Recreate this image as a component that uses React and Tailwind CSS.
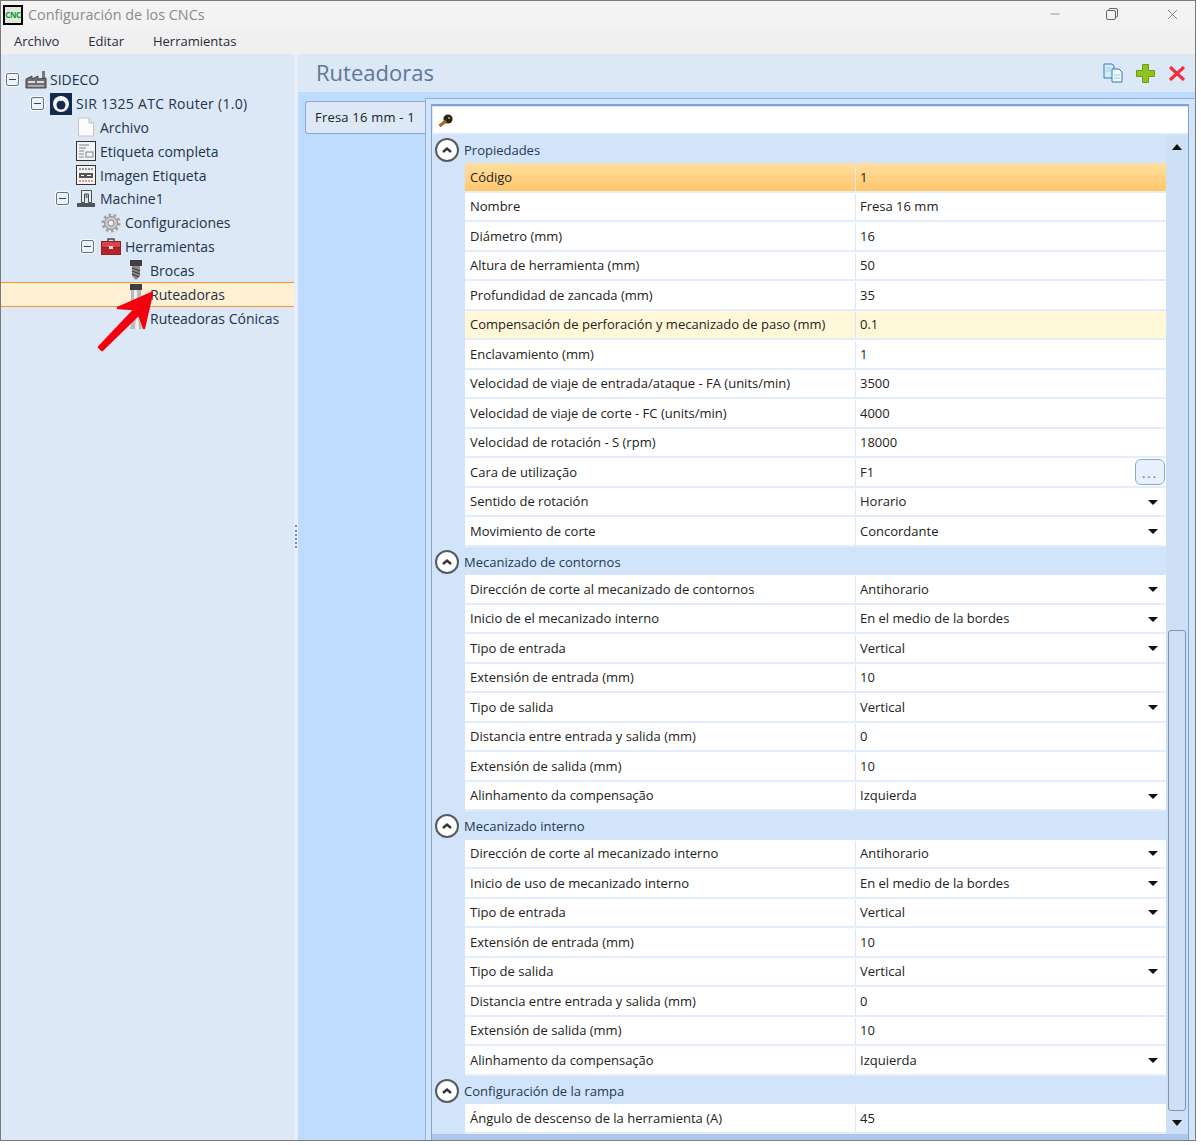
import { Minus, X } from 'lucide-react';

const FONT = "font-['Open_Sans','Noto_Sans',sans-serif]";

const Expander = () => (
  <span className="flex h-[13px] w-[13px] items-center justify-center rounded-[2px] border border-[#5f7488] bg-[#eef3fa] shadow-[0_0_0_1px_#f7faff]">
    <span className="h-px w-[7px] bg-[#33475c]" />
  </span>
);

const AppIcon = () => (
  <div className="flex h-[20px] w-[20px] items-center justify-center border-2 border-black bg-[#dfe8df] text-[8px] font-bold leading-none tracking-[-0.4px] text-[#0d9a2e]">
    CNC
  </div>
);

const Factory = () => (
  <svg width="22" height="20" viewBox="0 0 22 20">
    <rect x="17" y="1" width="3" height="8" fill="#777" />
    <path d="M1 9 L7 6 V9 L13 6 V9 L21 8 V18 H1 Z" fill="#6f6f6f" stroke="#4a4a4a" />
    <rect x="3" y="11" width="7" height="2" fill="#ddd" />
    <rect x="12" y="11" width="7" height="2" fill="#ddd" />
    <rect x="3" y="15" width="16" height="2" fill="#aaa" />
  </svg>
);

const SirLogo = () => (
  <svg width="22" height="22" viewBox="0 0 22 22">
    <rect width="22" height="22" fill="#132a50" />
    <circle cx="11" cy="11" r="8" fill="#f4f6f9" />
    <circle cx="11" cy="12" r="4.5" fill="#132a50" />
    <rect x="10" y="3" width="2" height="5" fill="#f4f6f9" />
  </svg>
);

const DocIcon = () => (
  <svg width="18" height="20" viewBox="0 0 18 20">
    <path d="M1.5 1 H12 L16.5 6 V19 H1.5 Z" fill="#fbfbfb" stroke="#c4c4c4" />
    <path d="M12 1 V6 H16.5" fill="#e6e6e6" stroke="#c4c4c4" />
  </svg>
);

const LabelIcon = () => (
  <svg width="20" height="20" viewBox="0 0 20 20">
    <rect x="0.5" y="0.5" width="19" height="19" fill="#f1f3f5" stroke="#333" />
    <path d="M3 4 H13 M3 7 H10 M3 10 H8 M3 13 H8 M3 16 H8" stroke="#7b8791" />
    <rect x="10" y="11" width="7" height="5" fill="none" stroke="#7b8791" />
  </svg>
);

const ImageLabelIcon = () => (
  <svg width="20" height="20" viewBox="0 0 20 20">
    <rect x="0.5" y="0.5" width="19" height="19" fill="#f4f4f4" stroke="#333" />
    <path d="M3 4 H17" stroke="#333" strokeDasharray="2 1" />
    <rect x="3" y="8" width="14" height="5" fill="#555" />
    <path d="M5 10.5 H8 M11 10.5 H15" stroke="#fff" />
    <path d="M3 16 H17" stroke="#d33" strokeDasharray="2 1" />
  </svg>
);

const MachineIcon = () => (
  <svg width="20" height="20" viewBox="0 0 20 20">
    <path d="M5.5 1.5 H15.5 V13.5 H12.5 V5 H8.5 V13.5 H5.5 Z" fill="#eceef0" stroke="#4a5058" />
    <rect x="9.5" y="5" width="2" height="4" fill="#777" />
    <rect x="1" y="14" width="18" height="4" fill="#4f555c" />
  </svg>
);

const GearIcon = () => (
  <svg width="20" height="20" viewBox="0 0 20 20">
    <circle cx="10" cy="10" r="6.5" fill="#c9c9c9" stroke="#8a8a8a" />
    <circle cx="10" cy="10" r="8" fill="none" stroke="#a0a0a0" strokeWidth="3" strokeDasharray="2.5 2.5" />
    <circle cx="10" cy="10" r="3" fill="#f0f0f0" stroke="#8a8a8a" />
  </svg>
);

const ToolboxIcon = () => (
  <svg width="20" height="18" viewBox="0 0 20 18">
    <path d="M7 5 V2 H13 V5" fill="none" stroke="#4a4a4a" strokeWidth="1.5" />
    <rect x="0.5" y="4.5" width="19" height="6" fill="#e0424a" stroke="#8d2228" />
    <rect x="0.5" y="10.5" width="19" height="7" fill="#b5232b" stroke="#8d2228" />
    <rect x="8" y="9" width="4" height="3" fill="#f0e0e0" />
  </svg>
);

const DrillBit = () => (
  <svg width="14" height="20" viewBox="0 0 14 20">
    <rect x="1" y="0" width="12" height="6" fill="#3f3f3f" />
    <path d="M3 6 H11 V16 L7 20 L3 16 Z" fill="#8b8b8b" />
    <path d="M3 8 L11 11 M3 11 L11 14 M3 14 L10 17" stroke="#3f3f3f" strokeWidth="1.3" />
  </svg>
);

const RouterBit = () => (
  <svg width="14" height="20" viewBox="0 0 14 20">
    <rect x="1" y="0" width="12" height="6" fill="#3f3f3f" />
    <rect x="2" y="6" width="10" height="14" fill="#b9b9b9" />
    <rect x="5" y="6" width="3" height="14" fill="#efefef" />
  </svg>
);

const ConeBit = () => (
  <svg width="14" height="20" viewBox="0 0 14 20">
    <rect x="4" y="0" width="7" height="4" fill="#3f3f3f" />
    <path d="M4 4 H11 L13 20 H1 Z" fill="#b9b9b9" />
    <path d="M7 4 H9 L10 20 H6 Z" fill="#efefef" />
  </svg>
);

const tree = [
  { label: 'SIDECO', indent: 'pl-0', icon: <Factory />, open: true },
  { label: 'SIR 1325 ATC Router (1.0)', indent: 'pl-[25px]', icon: <SirLogo />, open: true, text: 'ml-px tracking-[0.28px]' },
  { label: 'Archivo', indent: 'pl-[50px]', icon: <DocIcon /> },
  { label: 'Etiqueta completa', indent: 'pl-[50px]', icon: <LabelIcon /> },
  { label: 'Imagen Etiqueta', indent: 'pl-[50px]', icon: <ImageLabelIcon /> },
  { label: 'Machine1', indent: 'pl-[50px]', icon: <MachineIcon />, open: true },
  { label: 'Configuraciones', indent: 'pl-[75px]', icon: <GearIcon /> },
  { label: 'Herramientas', indent: 'pl-[75px]', icon: <ToolboxIcon />, open: true },
  { label: 'Brocas', indent: 'pl-[100px]', icon: <DrillBit /> },
  { label: 'Ruteadoras', indent: 'pl-[100px]', icon: <RouterBit />, selected: true },
  { label: 'Ruteadoras Cónicas', indent: 'pl-[100px]', icon: <ConeBit /> },
];

const contourRows = (a, b, c) => [
  { label: a, value: 'Antihorario', select: true },
  { label: b, value: 'En el medio de la bordes', select: true },
  { label: 'Tipo de entrada', value: 'Vertical', select: true },
  { label: 'Extensión de entrada (mm)', value: '10' },
  { label: 'Tipo de salida', value: 'Vertical', select: true },
  { label: 'Distancia entre entrada y salida (mm)', value: '0' },
  { label: 'Extensión de salida (mm)', value: '10' },
  { label: c, value: 'Izquierda', select: true },
];

const sections = [
  {
    title: 'Propiedades',
    rows: [
      { label: 'Código', value: '1', active: true },
      { label: 'Nombre', value: 'Fresa 16 mm' },
      { label: 'Diámetro (mm)', value: '16' },
      { label: 'Altura de herramienta (mm)', value: '50' },
      { label: 'Profundidad de zancada (mm)', value: '35' },
      { label: 'Compensación de perforación y mecanizado de paso (mm)', value: '0.1', modified: true },
      { label: 'Enclavamiento (mm)', value: '1' },
      { label: 'Velocidad de viaje de entrada/ataque - FA (units/min)', value: '3500' },
      { label: 'Velocidad de viaje de corte - FC (units/min)', value: '4000' },
      { label: 'Velocidad de rotación - S (rpm)', value: '18000' },
      { label: 'Cara de utilização', value: 'F1', more: true },
      { label: 'Sentido de rotación', value: 'Horario', select: true },
      { label: 'Movimiento de corte', value: 'Concordante', select: true },
    ],
  },
  {
    title: 'Mecanizado de contornos',
    rows: contourRows(
      'Dirección de corte al mecanizado de contornos',
      'Inicio de el mecanizado interno',
      'Alinhamento da compensação',
    ),
  },
  {
    title: 'Mecanizado interno',
    rows: contourRows(
      'Dirección de corte al mecanizado interno',
      'Inicio de uso de mecanizado interno',
      'Alinhamento da compensação',
    ),
  },
  {
    title: 'Configuración de la rampa',
    rows: [{ label: 'Ángulo de descenso de la herramienta (A)', value: '45' }],
  },
];

const Triangle = () => (
  <svg width="10" height="5" viewBox="0 0 10 5" className="block">
    <path d="M0 0 H10 L5 5 Z" fill="#111" />
  </svg>
);

const TreeRow = ({ item }) => (
  <div
    className={`flex items-center ${item.indent} ${
      item.selected ? 'h-[24.5px] border-y border-[#f6932b] bg-[#fff0d3]' : 'h-[23.8px]'
    }`}
  >
    <span className="flex w-[23px] shrink-0 justify-center">{item.open && <Expander />}</span>
    <span className="flex w-[26px] shrink-0 justify-center pr-[2px]">{item.icon}</span>
    <span className={`whitespace-nowrap text-[#23344a] ${item.text || ''}`}>{item.label}</span>
  </div>
);

const PropRow = ({ row }) => {
  let tone = 'bg-white';
  if (row.active) tone = 'bg-gradient-to-b from-[#ffdf9f] to-[#ffc769]';
  if (row.modified) tone = 'bg-[#fff8d8]';
  return (
    <div className={`flex h-[29.5px] border-b-2 border-[#e4eefb] pt-[1px] ${tone}`}>
      <div className="flex w-[391px] shrink-0 items-center border-r border-[#dbe7f7] pl-[5px] whitespace-nowrap">
        {row.label}
      </div>
      <div className="relative flex flex-1 items-center pr-[8px] pl-[4px]">
        <span className="flex-1">{row.value}</span>
        {row.select && <Triangle />}
        {row.more && (
          <span className="absolute top-[0px] right-[1px] flex h-[26px] w-[30px] items-end justify-center rounded-[6px] border border-[#8ba8d4] bg-[#e7f0fd] pb-[1px] tracking-[2px] text-[#5c6d85]">
            ...
          </span>
        )}
      </div>
    </div>
  );
};

const Section = ({ section }) => (
  <div className="bg-[#d2e4fa]">
    <div className="relative flex h-[28.4px] items-center rounded-t-[3px] pt-[3px] pl-[32px] text-[#233a55]">
      <span className="absolute top-[3px] left-[3px] flex h-[24px] w-[24px] items-center justify-center rounded-full border-2 border-[#565b60] bg-white">
        <svg width="12" height="8" viewBox="0 0 12 8">
          <path d="M2 6 L6 2.5 L10 6" fill="none" stroke="#333" strokeWidth="2.4" />
        </svg>
      </span>
      {section.title}
    </div>
    <div className="pl-[33px]">
      {section.rows.map((row) => (
        <PropRow key={row.label} row={row} />
      ))}
    </div>
  </div>
);

export default function App() {
  return (
    <div className={`relative flex h-[1141px] w-[1196px] flex-col overflow-hidden border border-[#7b7b7b] bg-[#f0f0f0] text-[13px] text-[#222] ${FONT}`}>
      <div className="flex h-[28px] shrink-0 items-center bg-[#f3f3f3] pl-[2px]">
        <AppIcon />
        <span className="ml-[5px] flex-1 text-[14.4px] text-[#8b8b8b]">Configuración de los CNCs</span>
        <Minus size={14} strokeWidth={1} className="mr-[44px] mb-[2px] text-[#555]" />
        <svg width="12" height="12" viewBox="0 0 12 12" className="mr-[46px] mb-[2px]">
          <rect x="0.5" y="2.5" width="9" height="9" rx="1.5" fill="none" stroke="#666" />
          <path d="M3 2.5 V1.5 Q3 0.5 4 0.5 H10 Q11.5 0.5 11.5 2 V8 Q11.5 9 10 9" fill="none" stroke="#666" />
        </svg>
        <X size={17} strokeWidth={1} className="mr-[14px] mb-[2px] text-[#555]" />
      </div>
      <div className="flex h-[25px] shrink-0 items-center gap-[29px] pl-[13px] text-[#2b2b3a]">
        <span>Archivo</span>
        <span>Editar</span>
        <span>Herramientas</span>
      </div>

      <div className="flex min-h-0 flex-1">
        <aside className="w-[293px] shrink-0 bg-[#dce8f6] pt-[14px] text-[14px]">
          {tree.map((item) => (
            <TreeRow key={item.label} item={item} />
          ))}
        </aside>

        <div className="flex w-[4px] shrink-0 items-start justify-center bg-[#e8eff9] pt-[471px]">
          <span className="h-[23px] w-[2px] border-l-2 border-dotted border-[#5f8fd0]" />
        </div>

        <main className="flex min-w-0 flex-1 flex-col bg-[#bfdbfe]">
          <div className="flex h-[38px] shrink-0 items-center bg-[#dce8f6] pr-[9px] pl-[18px]">
            <h1 className="flex-1 pb-[2px] text-[22px] text-[#5b7896]">Ruteadoras</h1>
            <div className="flex items-center gap-[13px]">
              <svg width="20" height="20" viewBox="0 0 20 20">
                <path d="M1 1 H9 L11 3 V15 H1 Z" fill="#d6ebf6" stroke="#2f7db8" />
                <path d="M9 6 H16 L19 9 V19 H9 Z" fill="#f0f8fc" stroke="#2f7db8" />
                <path d="M3 5 H8 M3 8 H8 M11 12 H17 M11 15 H17" stroke="#9ccbe4" />
              </svg>
              <svg width="19" height="19" viewBox="0 0 19 19">
                <path d="M6.5 0.5 H12.5 V6.5 H18.5 V12.5 H12.5 V18.5 H6.5 V12.5 H0.5 V6.5 H6.5 Z" fill="#8fc31f" stroke="#6b9a14" />
              </svg>
              <svg width="18" height="15" viewBox="0 0 18 15">
                <path d="M2 1 L16 14 M16 1 L2 14" stroke="#f0303c" strokeWidth="3.2" />
              </svg>
            </div>
          </div>

          <div className="flex min-h-0 flex-1 pt-[6px]">
            <div className="w-[127px] shrink-0 pt-[3px] pl-[7px]">
              <div className="flex h-[33px] items-center rounded-l-[3px] border border-r-0 border-[#87a9d8] bg-[#dce8f6] pl-[9px] tracking-[0.2px] whitespace-nowrap text-[#222]">
                Fresa 16 mm - 1
              </div>
            </div>
            <div className="flex min-w-0 flex-1 border-t border-l border-[#8fb0de] bg-[#d3e4fa] pt-[5px] pl-[5px]">
              <div className="flex min-w-0 flex-col border-t-2 border-r border-l border-[#7ea3d6] bg-[#adc7ec]">
                <div className="h-[29px] w-[756px] shrink-0 bg-[#dbe8fa] pt-px pb-[2px] pl-px">
                  <div className="flex h-full items-center bg-white pl-[5px]">
                    <svg width="15" height="13" viewBox="0 0 15 13">
                      <circle cx="10" cy="5" r="4.6" fill="#2b2420" />
                      <path d="M8 7 L1.5 12" stroke="#a8681a" strokeWidth="3.2" />
                      <circle cx="11" cy="4" r="1" fill="#e8a030" />
                    </svg>
                  </div>
                </div>
                <div className="flex h-[999px] min-h-0 shrink-0">
                  <div className="w-[734px] shrink-0 self-start bg-[#d2e4fa]">
                    {sections.map((section) => (
                      <Section key={section.title} section={section} />
                    ))}
                  </div>
                  <div className="flex w-[22px] shrink-0 flex-col items-center bg-[#cddff5] pt-[9px]">
                    <svg width="10" height="6" viewBox="0 0 10 6">
                      <path d="M0 6 H10 L5 0 Z" fill="#111" />
                    </svg>
                    <div className="mt-[480px] h-[481px] w-[18px] rounded-[3px] border border-[#7d96b8] bg-[#cfe0f6]" />
                    <div className="mt-[9px]">
                      <svg width="10" height="6" viewBox="0 0 10 6">
                        <path d="M0 0 H10 L5 6 Z" fill="#111" />
                      </svg>
                    </div>
                  </div>
                </div>
              </div>
            </div>
          </div>
        </main>
      </div>

      <svg width="70" height="70" viewBox="0 0 70 70" className="absolute top-[284px] left-[92px]">
        <path
          d="M6 62 L42 24 L25 23 L59 8 L51 43 L46 29 L9 65 Z"
          fill="#f5000f"
          stroke="#f5000f"
          strokeWidth="2.5"
          strokeLinejoin="round"
        />
      </svg>
    </div>
  );
}
